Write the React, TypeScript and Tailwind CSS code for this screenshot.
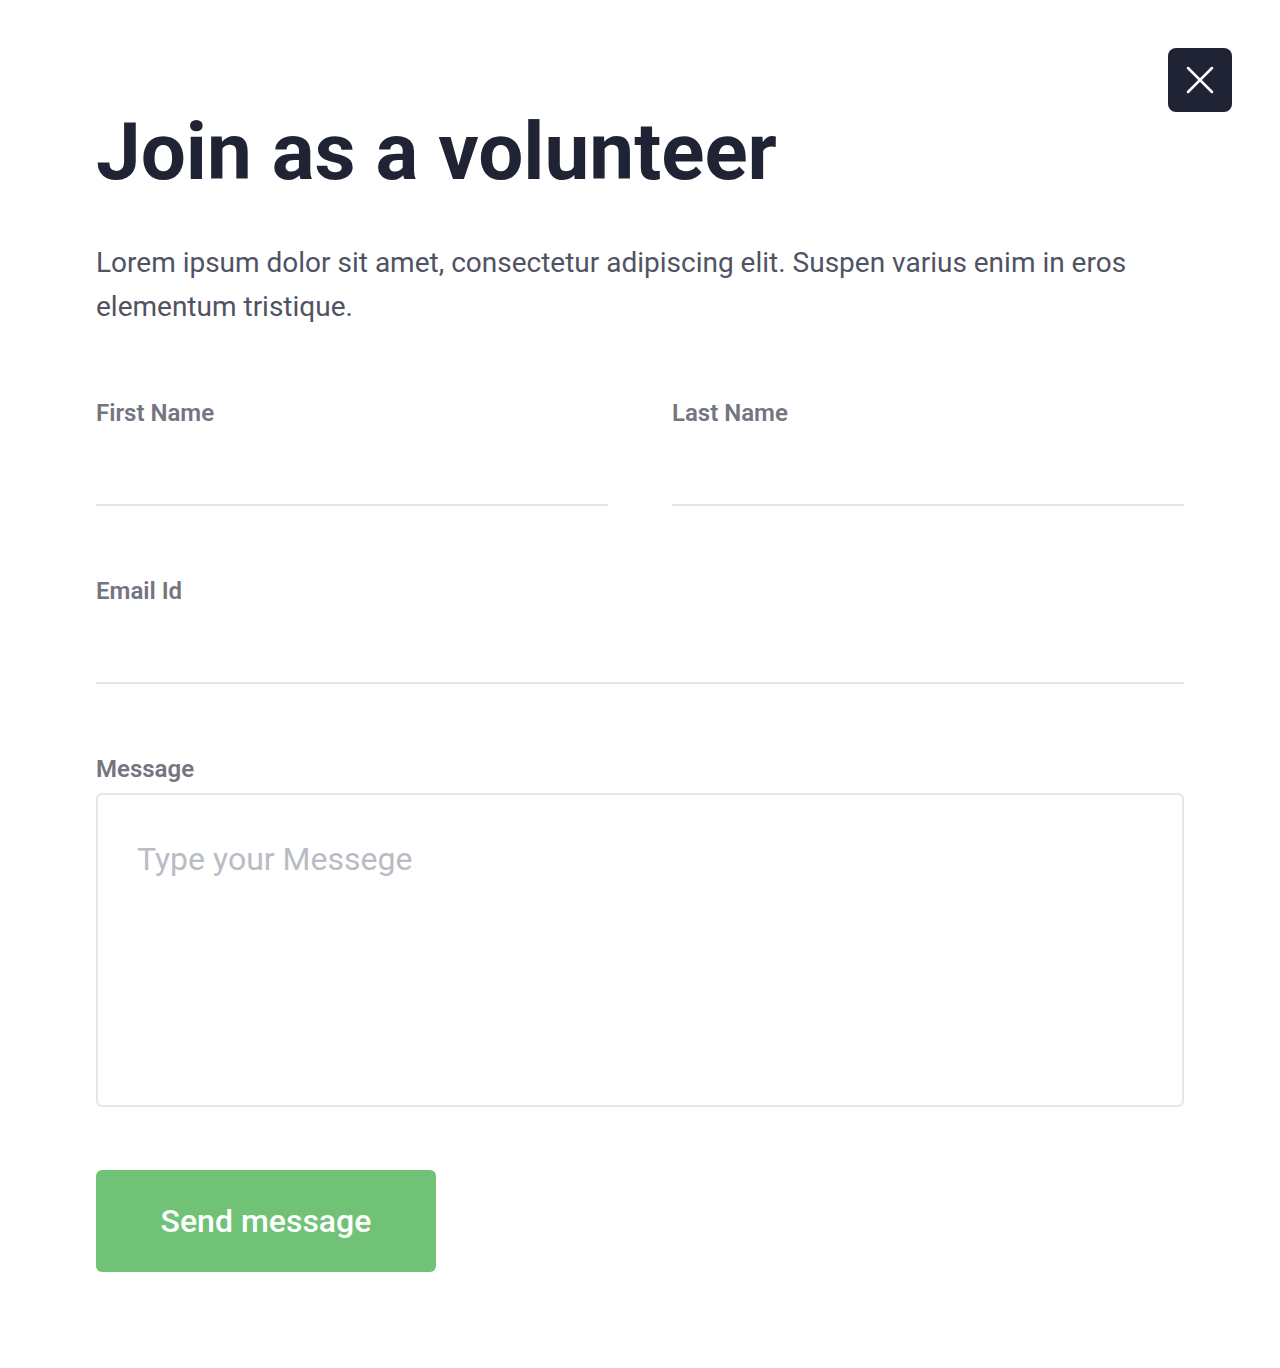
import React from 'react';

const font = { fontFamily: 'Roboto, "Noto Sans", sans-serif' };

const Field: React.FC<{ label: string }> = ({ label }) => (
  <div className="flex flex-col">
    <label className="text-[24px] font-semibold leading-[30px] text-[#737580]">{label}</label>
    <input
      type="text"
      className="mt-[46px] h-[32px] border-b-2 border-[#e6e6e6] bg-transparent outline-none"
    />
  </div>
);

export default function App() {
  return (
    <div className="relative min-h-[1368px] w-full bg-white" style={font}>
      {/* Close */}
      <button className="absolute right-12 top-12 flex h-16 w-16 items-center justify-center rounded-lg bg-[#1f2333]">
        <svg width="30" height="30" viewBox="0 0 30 30" fill="none" stroke="white" strokeWidth="2.5" strokeLinecap="round">
          <path d="M3 3 L27 27" />
          <path d="M27 3 L3 27" />
        </svg>
      </button>

      <div className="px-[96px] pt-[104px]">
        <h1 className="text-[80px] font-bold leading-[96px] text-[#1f2333]">Join as a volunteer</h1>

        <p className="mt-[41px] text-[28px] leading-[44px] text-[#4f5363]">
          Lorem ipsum dolor sit amet, consectetur adipiscing elit. Suspen varius enim in eros elementum tristique.
        </p>

        <div className="mt-[69px] grid grid-cols-2 gap-x-[64px]">
          <Field label="First Name" />
          <Field label="Last Name" />
        </div>

        <div className="mt-[70px]">
          <Field label="Email Id" />
        </div>

        <div className="mt-[70px] flex flex-col">
          <label className="text-[24px] font-semibold leading-[30px] text-[#737580]">Message</label>
          <textarea
            placeholder="Type your Messege"
            className="mt-[9px] h-[314px] resize-none rounded-md border-2 border-[#e6e6e6] px-[39px] pt-[44px] text-[32px] leading-[40px] text-[#1f2333] outline-none placeholder:text-[#b9bcc4]"
          />
        </div>

        <button className="mt-[63px] flex h-[102px] w-[340px] items-center justify-center rounded-md bg-[#6fc276] text-[32px] font-medium text-white">
          Send message
        </button>
      </div>
    </div>
  );
}
